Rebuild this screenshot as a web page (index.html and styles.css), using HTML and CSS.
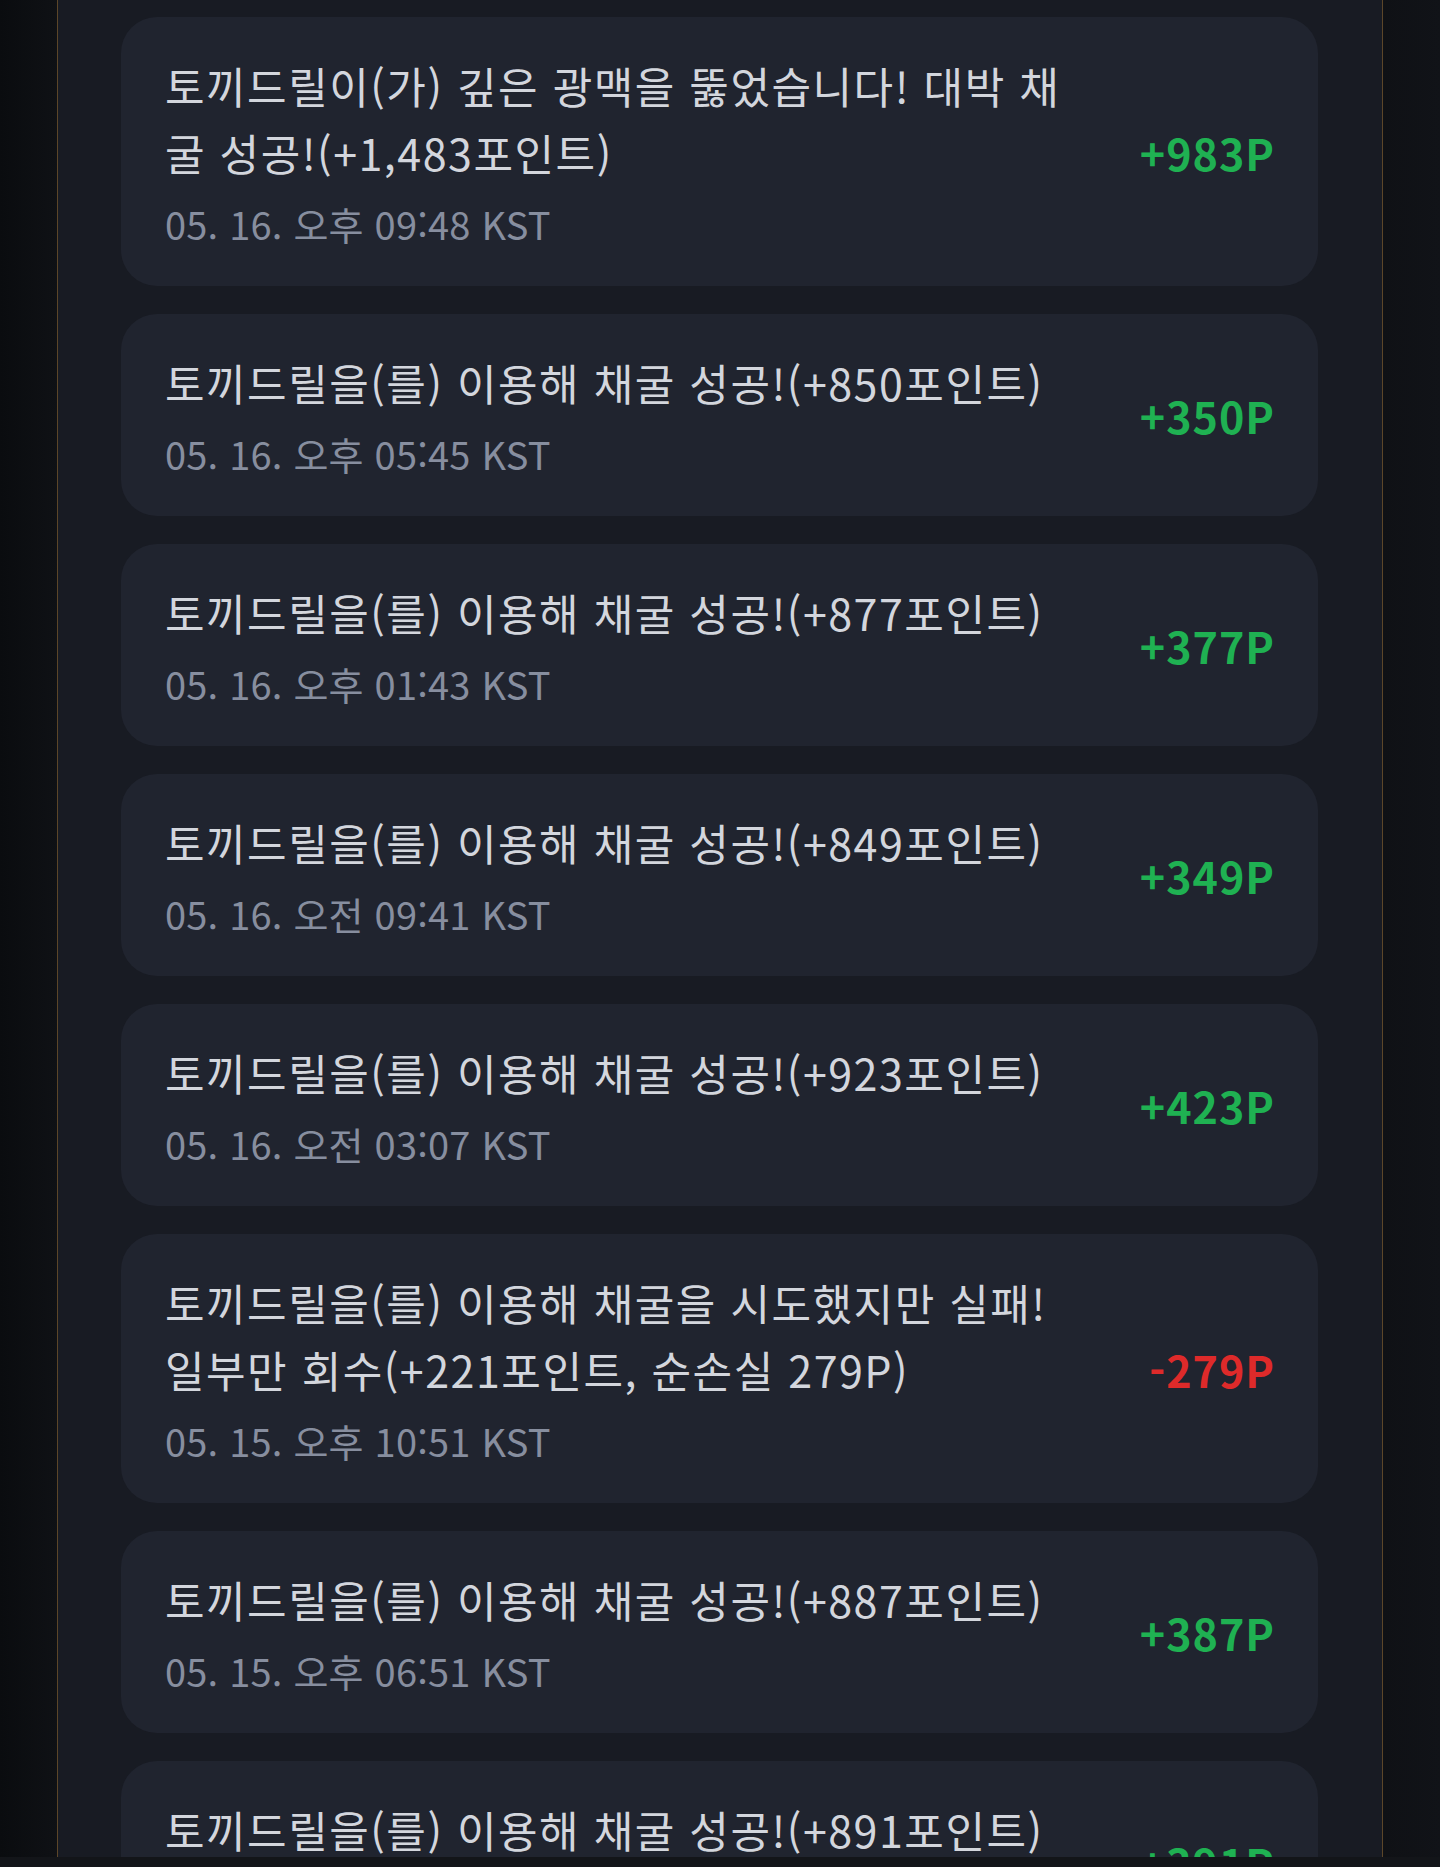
FILE: index.html
```html
<!DOCTYPE html>
<html lang="ko">
<head>
<meta charset="utf-8">
<title>채굴 기록</title>
<link rel="stylesheet" href="styles.css">
</head>
<body>
<div class="page">
  <main class="panel">
    <ul class="log">
      <li class="card">
        <div class="info">
          <p class="title">토끼드릴이(가) 깊은 광맥을 뚫었습니다! 대박 채굴 성공!(+1,483포인트)</p>
          <p class="date">05. 16. 오후 09:48 KST</p>
        </div>
        <span class="amount plus">+983P</span>
      </li>
      <li class="card">
        <div class="info">
          <p class="title">토끼드릴을(를) 이용해 채굴 성공!(+850포인트)</p>
          <p class="date">05. 16. 오후 05:45 KST</p>
        </div>
        <span class="amount plus">+350P</span>
      </li>
      <li class="card">
        <div class="info">
          <p class="title">토끼드릴을(를) 이용해 채굴 성공!(+877포인트)</p>
          <p class="date">05. 16. 오후 01:43 KST</p>
        </div>
        <span class="amount plus">+377P</span>
      </li>
      <li class="card">
        <div class="info">
          <p class="title">토끼드릴을(를) 이용해 채굴 성공!(+849포인트)</p>
          <p class="date">05. 16. 오전 09:41 KST</p>
        </div>
        <span class="amount plus">+349P</span>
      </li>
      <li class="card">
        <div class="info">
          <p class="title">토끼드릴을(를) 이용해 채굴 성공!(+923포인트)</p>
          <p class="date">05. 16. 오전 03:07 KST</p>
        </div>
        <span class="amount plus">+423P</span>
      </li>
      <li class="card">
        <div class="info">
          <p class="title">토끼드릴을(를) 이용해 채굴을 시도했지만 실패! 일부만 회수(+221포인트, 순손실 279P)</p>
          <p class="date">05. 15. 오후 10:51 KST</p>
        </div>
        <span class="amount minus">-279P</span>
      </li>
      <li class="card">
        <div class="info">
          <p class="title">토끼드릴을(를) 이용해 채굴 성공!(+887포인트)</p>
          <p class="date">05. 15. 오후 06:51 KST</p>
        </div>
        <span class="amount plus">+387P</span>
      </li>
      <li class="card">
        <div class="info">
          <p class="title">토끼드릴을(를) 이용해 채굴 성공!(+891포인트)</p>
          <p class="date">05. 15. 오후 02:48 KST</p>
        </div>
        <span class="amount plus">+391P</span>
      </li>
    </ul>
  </main>
</div>
<div class="bottom-bar"></div>
</body>
</html>
```

FILE: styles.css
```css
* {
  box-sizing: border-box;
}

html, body {
  margin: 0;
  padding: 0;
  background: #0d0f13;
  height: 1867px;
  overflow: hidden;
}

body {
  font-family: "Noto Sans CJK KR", "Noto Sans", sans-serif;
}

.page {
  display: flex;
  justify-content: center;
  background: linear-gradient(to right, #0a0c0f 0, #0f1115 57px, #0f1115 1383px, #111318 1440px);
  min-height: 1867px;
}

.panel {
  width: 1326px;
  background: #181b23;
  border-left: 1px solid #5c4629;
  border-right: 1px solid #5c4629;
  padding: 17px 64px 0 63px;
}

.log {
  list-style: none;
  margin: 0;
  padding: 0;
  display: flex;
  flex-direction: column;
  gap: 28px;
}

.card {
  display: flex;
  align-items: center;
  justify-content: space-between;
  background: #20242f;
  border-radius: 36px;
  padding: 35px 43px 34px 44px;
}

.info {
  width: 925px;
}

.title {
  margin: 0;
  font-size: 43px;
  line-height: 67px;
  color: #d3d6dd;
  letter-spacing: 1.5px;
}

.date {
  margin: 9px 0 0;
  font-size: 38px;
  line-height: 57px;
  color: #878e9f;
  letter-spacing: 0.2px;
}

.amount {
  font-size: 43px;
  font-weight: 700;
  line-height: 1;
  letter-spacing: 1px;
  white-space: nowrap;
}

.plus {
  color: #1fb152;
}

.minus {
  color: #de2a2a;
}

.bottom-bar {
  position: fixed;
  left: 0;
  right: 0;
  bottom: 0;
  height: 10px;
  background: #131519;
}
```
